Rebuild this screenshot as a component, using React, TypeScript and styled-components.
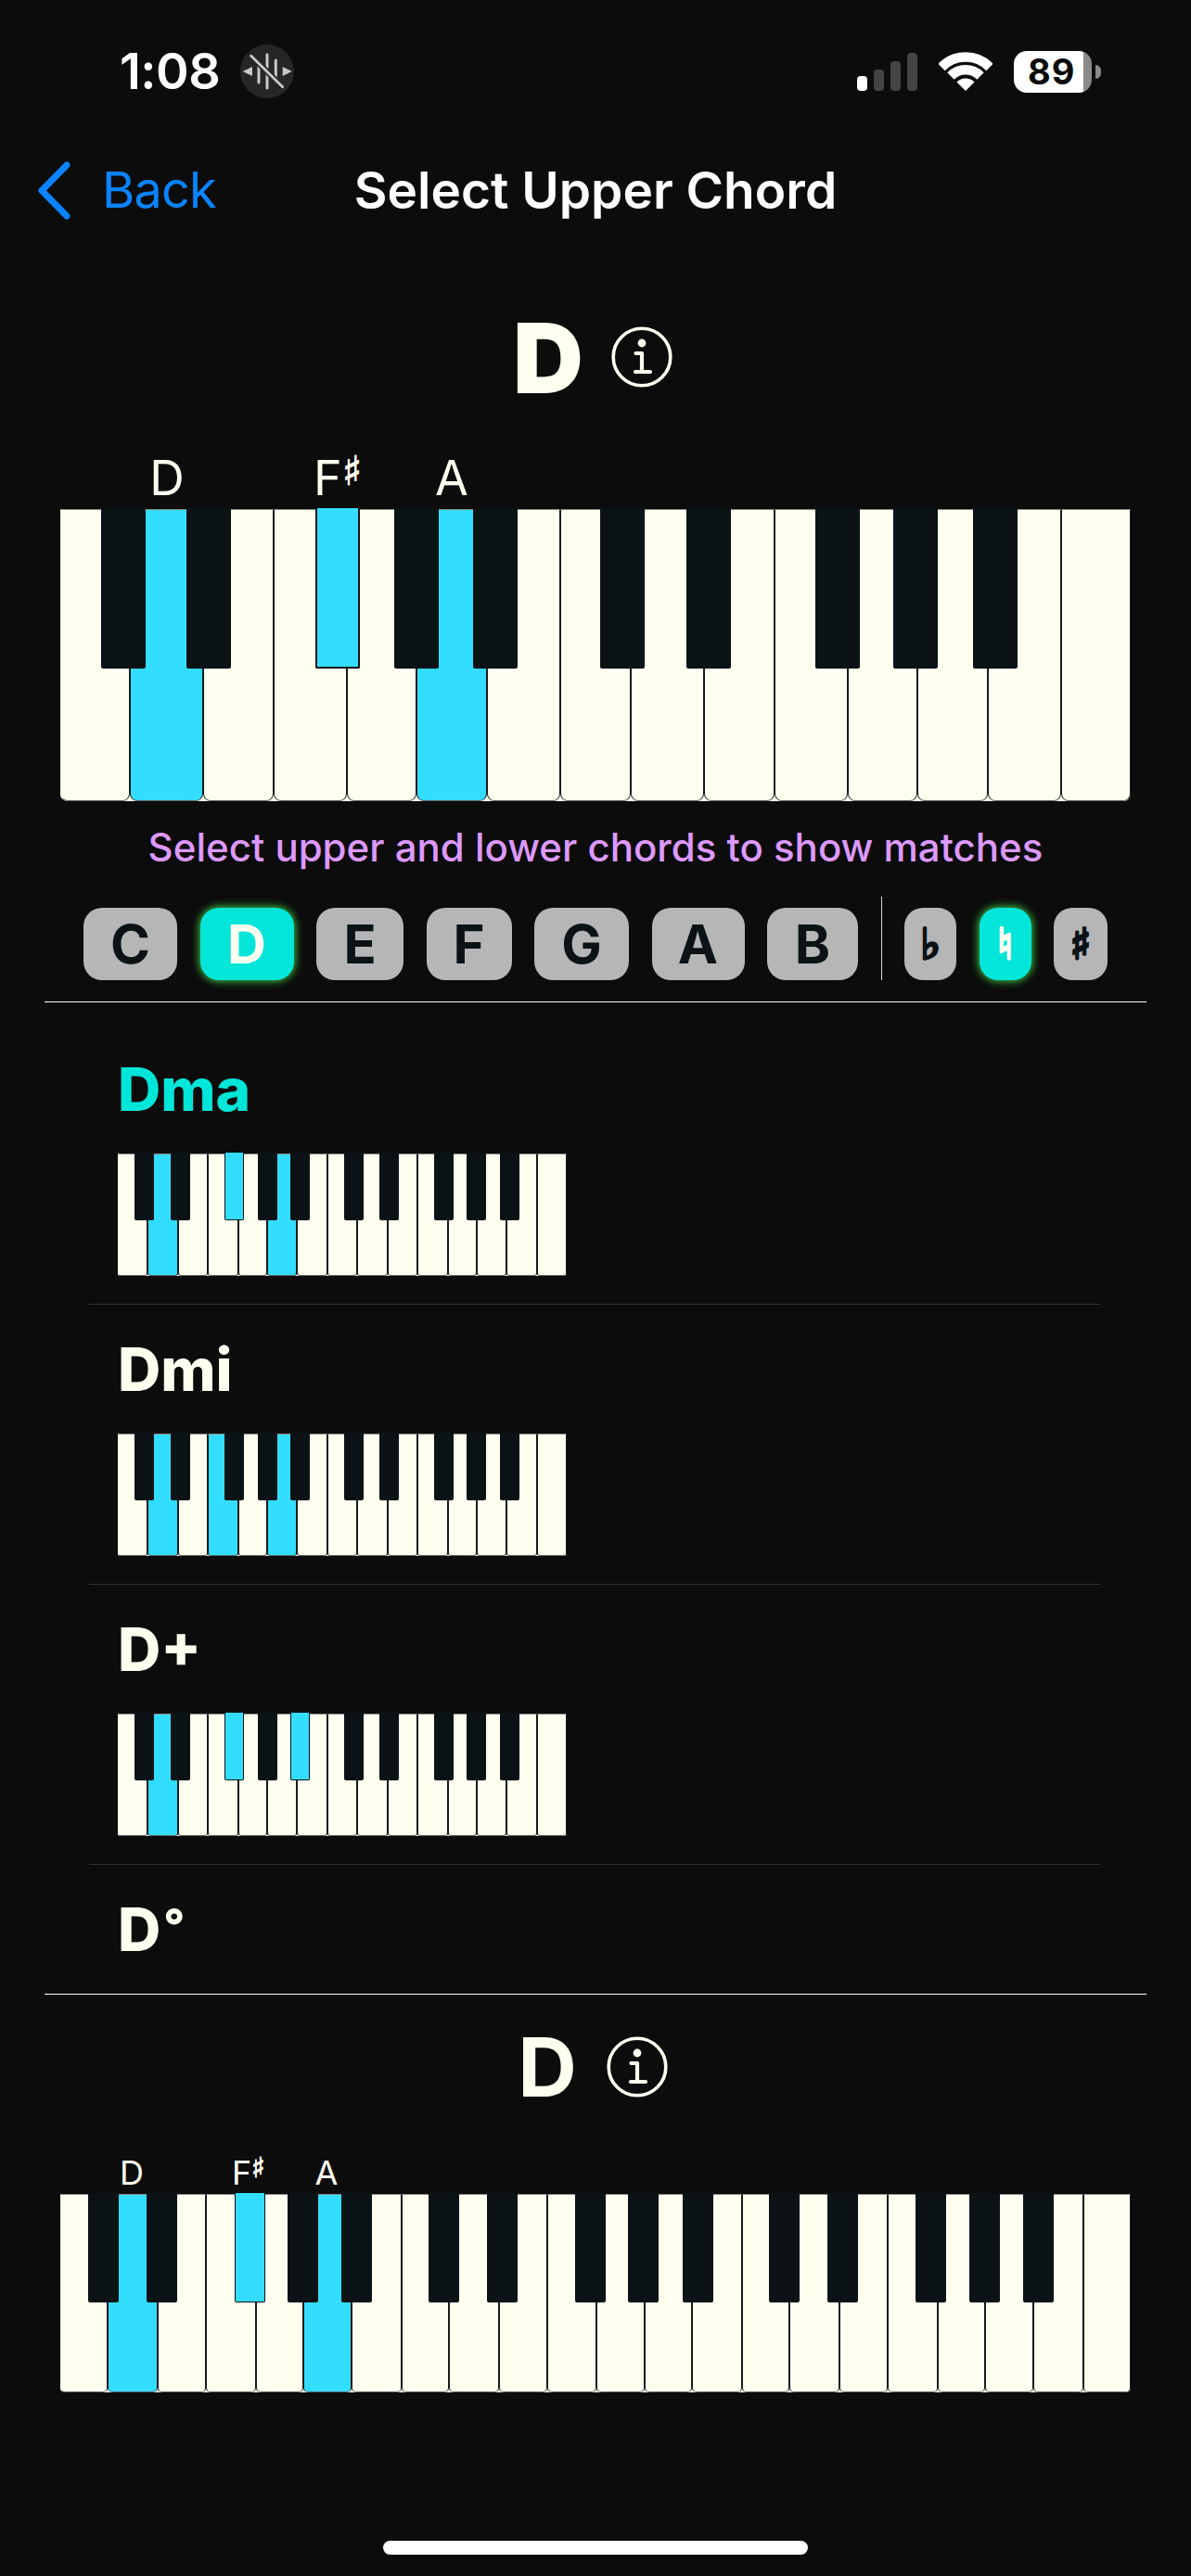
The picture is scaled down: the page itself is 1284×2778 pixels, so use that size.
import React from 'react';
import styled, { createGlobalStyle } from 'styled-components';

const IVORY = '#fffff0';
const CYAN = '#33ddff';
const TEAL = '#04e6d9';
const INK = '#0b1316';

const GlobalStyle = createGlobalStyle`
  html, body {
    margin: 0;
    padding: 0;
    background: #0c0c0c;
  }
  * {
    box-sizing: border-box;
  }
`;

const Page = styled.div`
  width: 1284px;
  height: 2778px;
  overflow: hidden;
  display: flex;
  flex-direction: column;
  align-items: center;
  background: #0c0c0c;
  color: ${IVORY};
  font-family: Inter, 'Liberation Sans', sans-serif;
`;

// Barra de status
const StatusBar = styled.div`
  width: 100%;
  height: 154px;
  display: flex;
  align-items: center;
  justify-content: space-between;
  padding: 0 97px 0 129px;
`;

const StatusLeft = styled.div`
  display: flex;
  align-items: center;
  gap: 22px;
`;

const Time = styled.span`
  font-size: 54px;
  font-weight: 600;
  color: #fff;
  line-height: 1;
  letter-spacing: -0.5px;
`;

const StatusRight = styled.div`
  display: flex;
  align-items: center;
  gap: 23px;
`;

const Signal = styled.div`
  display: flex;
  align-items: flex-end;
  gap: 7px;
  height: 41px;
`;

const SignalBar = styled.div<{ $h: number; $on?: boolean }>`
  width: 11px;
  height: ${p => p.$h}px;
  border-radius: 4px;
  background: ${p => (p.$on ? '#fff' : '#444')};
`;

const Battery = styled.div`
  position: relative;
  width: 84px;
  height: 45px;
  border-radius: 14px;
  overflow: hidden;
  background: linear-gradient(to right, #fff 0, #fff 75px, #8a8a8a 75px);
  color: #0b0b0b;
  font-size: 38px;
  font-weight: 700;
  line-height: 45px;
  padding-left: 15px;
  letter-spacing: 1px;
`;

const BatteryGroup = styled.div`
  display: flex;
  align-items: center;
  gap: 4px;
`;

const BatteryTip = styled.div`
  width: 6px;
  height: 15px;
  border-radius: 0 8px 8px 0;
  background: #8a8a8a;
`;

// Navegação
const Nav = styled.div`
  width: 100%;
  height: 102px;
  display: grid;
  grid-template-columns: 1fr auto 1fr;
  align-items: center;
  padding: 0 41px;
`;

const BackLink = styled.div`
  display: flex;
  align-items: center;
  gap: 34px;
  color: #0a84ff;
  font-size: 54px;
  font-weight: 400;
  line-height: 1;
  letter-spacing: -0.8px;
`;

const NavTitle = styled.div`
  font-size: 55px;
  font-weight: 600;
  color: #fff;
  line-height: 1;
`;

// Cabeçalho do acorde
const ChordHeading = styled.div<{ $h: number; $top: number; $gap: number; $shift: number }>`
  height: ${p => p.$h}px;
  margin-top: ${p => p.$top}px;
  padding-right: ${p => p.$shift}px;
  display: flex;
  align-items: center;
  gap: ${p => p.$gap}px;
`;

const ChordLetter = styled.span<{ $size: number; $weight: number }>`
  font-size: ${p => p.$size}px;
  font-weight: ${p => p.$weight};
  line-height: 1;
`;

// Teclado
const KeyboardBox = styled.div<{ $w: number; $h: number; $top: number; $r: number }>`
  position: relative;
  flex: none;
  width: ${p => p.$w}px;
  height: ${p => p.$h}px;
  margin-top: ${p => p.$top}px;
  display: flex;
  background: ${IVORY};
  border-radius: 0 0 ${p => p.$r}px ${p => p.$r}px;
`;

const WhiteKey = styled.div<{ $grow: number; $on: boolean; $r: number }>`
  flex: ${p => p.$grow} 1 0;
  height: 100%;
  background: ${p => (p.$on ? CYAN : IVORY)};
  border-left: 1px solid #171b1d;
  border-right: 1px solid #171b1d;
  border-bottom: 1px solid #5b6062;
  border-top: 1px solid #8a8d88;
  border-radius: 0 0 ${p => p.$r}px ${p => p.$r}px;

  &:first-child {
    border-left-color: transparent;
  }
  &:last-of-type {
    border-right-color: transparent;
  }
`;

const BlackKey = styled.div<{ $on: boolean; $h: number; $line: number }>`
  position: absolute;
  top: -1px;
  height: ${p => p.$h}px;
  background: ${p => (p.$on ? CYAN : INK)};
  border: ${p => (p.$on ? `${p.$line}px solid ${INK}` : 'none')};
  border-top: none;
  border-radius: 0 0 2px 2px;
`;

const KeyLabel = styled.span<{ $size: number; $lift: number }>`
  position: absolute;
  bottom: 100%;
  margin-bottom: ${p => p.$lift}px;
  transform: translateX(-50%);
  font-size: ${p => p.$size}px;
  font-weight: 400;
  line-height: 1;
  white-space: nowrap;
`;

const Sharp = styled.span`
  font-family: 'DejaVu Sans', sans-serif;
  font-weight: 700;
  font-size: 0.84em;
  vertical-align: 0.26em;
  -webkit-text-stroke: 1px ${IVORY};
`;

const Hint = styled.div`
  margin-top: 20px;
  height: 60px;
  font-size: 42px;
  font-weight: 500;
  line-height: 60px;
  color: #dd99ff;
`;

const ButtonRow = styled.div`
  height: 90px;
  margin-top: 23px;
  display: flex;
  align-items: flex-end;
  justify-content: center;
  gap: 24.5px;
`;

const NoteButton = styled.div<{ $w: number; $on?: boolean; $accidental?: boolean }>`
  width: ${p => p.$w}px;
  height: 78px;
  display: flex;
  align-items: center;
  justify-content: center;
  border-radius: 20px;
  background: ${p => (p.$on ? TEAL : '#b6b6b6')};
  color: ${p => (p.$on ? IVORY : INK)};
  box-shadow: ${p => (p.$on ? '0 0 9px 1px #3fd44c' : 'none')};
  font-family: ${p => (p.$accidental ? "'DejaVu Sans', sans-serif" : 'Inter, sans-serif')};
  font-size: ${p => (p.$accidental ? 46 : 58)}px;
  font-weight: 700;
  line-height: 1;
  -webkit-text-stroke: ${p => (p.$accidental ? `3px ${p.$on ? IVORY : INK}` : '0')};
`;

const RowSplit = styled.div`
  width: 1px;
  height: 90px;
  background: #d8d8d0;
`;

const Rule = styled.div<{ $top?: number }>`
  flex: none;
  width: 1188px;
  height: 1px;
  margin-top: ${p => p.$top ?? 0}px;
  background: ${IVORY};
`;

// Lista de acordes
const ChordList = styled.div`
  flex: none;
  width: 100%;
  height: 1069px;
  padding: 24px 97px 0 96px;
  overflow: hidden;
`;

const ChordRow = styled.div`
  height: 302px;
  padding: 35px 0 0 31px;
  border-bottom: 1px solid #333;
`;

const ChordName = styled.div<{ $active?: boolean }>`
  height: 70px;
  font-size: 64px;
  font-weight: 800;
  line-height: 70px;
  color: ${p => (p.$active ? '#00e6d8' : IVORY)};
`;

const Degree = styled.span`
  position: relative;
  top: -10px;
  margin-left: 3px;
  font-size: 50px;
`;

const HomeIndicator = styled.div`
  flex: none;
  width: 458px;
  height: 15px;
  margin-top: 160px;
  border-radius: 8px;
  background: #fff;
`;

type KeyboardProps = {
  width: number;
  height: number;
  octaves: number;
  notes: string[];
  top?: number;
  radius?: number;
  blackWidth: number;
  blackHeight: number;
  blackLine?: number;
  labels?: { text: React.ReactNode; at: number }[];
  labelSize?: number;
  labelLift?: number;
};

const WHITE = ['C', 'D', 'E', 'F', 'G', 'A', 'B'];
const WHITE_SIZE = [0.974, 1.026, 0.987, 1.026, 0.974, 0.987, 1.026];
const BLACK = [
  { name: 'C#', at: 0.88 },
  { name: 'D#', at: 2.08 },
  { name: 'F#', at: 3.89 },
  { name: 'G#', at: 4.99 },
  { name: 'A#', at: 6.1 },
];

function Keyboard({
  width,
  height,
  octaves,
  notes,
  top = 0,
  radius = 8,
  blackWidth,
  blackHeight,
  blackLine = 1,
  labels = [],
  labelSize = 52,
  labelLift = 6,
}: KeyboardProps) {
  const unit = width / (octaves * 7 + 1);
  const whites: { id: string; size: number }[] = [];
  for (let o = 0; o < octaves; o++) {
    WHITE.forEach((n, i) => whites.push({ id: n + o, size: WHITE_SIZE[i] }));
  }
  whites.push({ id: 'C' + octaves, size: WHITE_SIZE[0] });

  const blacks: { id: string; center: number }[] = [];
  for (let o = 0; o < octaves; o++) {
    BLACK.forEach(b => blacks.push({ id: b.name + o, center: (b.at + o * 7) * unit }));
  }

  return (
    <KeyboardBox $w={width} $h={height} $top={top} $r={radius}>
      {whites.map(k => (
        <WhiteKey key={k.id} $grow={k.size} $on={notes.includes(k.id)} $r={radius} />
      ))}
      {blacks.map(k => (
        <BlackKey
          key={k.id}
          $on={notes.includes(k.id)}
          $h={blackHeight}
          $line={blackLine}
          style={{ left: k.center - blackWidth / 2, width: blackWidth }}
        />
      ))}
      {labels.map((l, i) => (
        <KeyLabel key={i} $size={labelSize} $lift={labelLift} style={{ left: l.at }}>
          {l.text}
        </KeyLabel>
      ))}
    </KeyboardBox>
  );
}

function InfoIcon() {
  return (
    <svg width="66" height="66" viewBox="0 0 66 66" fill="none">
      <circle cx="33" cy="33" r="30.8" stroke={IVORY} strokeWidth="3.6" />
      <circle cx="33" cy="18" r="4.4" fill={IVORY} />
      <path
        d="M26.5 29H33V49M26 49H42"
        stroke={IVORY}
        strokeWidth="4.2"
        strokeLinecap="round"
        strokeLinejoin="round"
      />
    </svg>
  );
}

function WifiIcon() {
  return (
    <svg width="58" height="42" viewBox="0 0 58 42">
      <path d="M3 16.5A36.5 36.5 0 0 1 55 16.5" fill="none" stroke="#fff" strokeWidth="10.5" />
      <path d="M13 26A22.5 22.5 0 0 1 45 26" fill="none" stroke="#fff" strokeWidth="10.5" />
      <path d="M29 42L19.5 32.5A13.5 13.5 0 0 1 38.5 32.5Z" fill="#fff" />
    </svg>
  );
}

function SilentIcon() {
  return (
    <svg width="58" height="58" viewBox="0 0 58 58">
      <circle cx="29" cy="29" r="29" fill="#262626" />
      <path d="M2.7 29L13 24V34Z M55.7 29L45.7 24V34Z" fill="#c8c8c8" />
      <path
        d="M20 22V41M29 10.7V47M38.3 17V41"
        stroke="#c8c8c8"
        strokeWidth="3"
        strokeLinecap="round"
      />
      <path d="M11.7 12.3L45.7 45.7" stroke="#262626" strokeWidth="6.5" />
      <path d="M11.7 12.3L45.7 45.7" stroke="#c8c8c8" strokeWidth="2.8" strokeLinecap="round" />
    </svg>
  );
}

function ChevronIcon() {
  return (
    <svg width="35" height="63" viewBox="0 0 35 63" fill="none">
      <path
        d="M31 4L4 31.5L31 59"
        stroke="#0a84ff"
        strokeWidth="7"
        strokeLinecap="round"
        strokeLinejoin="round"
      />
    </svg>
  );
}

const noteButtons = [
  { text: 'C', w: 101 },
  { text: 'D', w: 101, on: true },
  { text: 'E', w: 94 },
  { text: 'F', w: 92 },
  { text: 'G', w: 102 },
  { text: 'A', w: 100 },
  { text: 'B', w: 98 },
];

const accidentals = [
  { text: '♭', w: 56 },
  { text: '♮', w: 56, on: true },
  { text: '♯', w: 58 },
];

const chords = [
  { name: 'Dma', active: true, notes: ['D0', 'F#0', 'A0'] },
  { name: 'Dmi', notes: ['D0', 'F0', 'A0'] },
  { name: 'D+', notes: ['D0', 'F#0', 'A#0'] },
];

const FSharp = (
  <>
    F<Sharp>♯</Sharp>
  </>
);

export default function App() {
  return (
    <Page>
      <GlobalStyle />

      <StatusBar>
        <StatusLeft>
          <Time>1:08</Time>
          <SilentIcon />
        </StatusLeft>
        <StatusRight>
          <Signal>
            <SignalBar $h={16} $on />
            <SignalBar $h={23} />
            <SignalBar $h={32} />
            <SignalBar $h={41} />
          </Signal>
          <WifiIcon />
          <BatteryGroup>
            <Battery>89</Battery>
            <BatteryTip />
          </BatteryGroup>
        </StatusRight>
      </StatusBar>

      <Nav>
        <BackLink>
          <ChevronIcon />
          Back
        </BackLink>
        <NavTitle>Select Upper Chord</NavTitle>
      </Nav>

      <ChordHeading $h={170} $top={44} $gap={30} $shift={6}>
        <ChordLetter $size={105} $weight={900}>
          D
        </ChordLetter>
        <InfoIcon />
      </ChordHeading>

      <Keyboard
        width={1154}
        height={315}
        octaves={2}
        top={79}
        radius={8}
        blackWidth={48}
        blackHeight={173}
        blackLine={2}
        notes={['D0', 'F#0', 'A0']}
        labels={[
          { text: 'D', at: 115 },
          { text: FSharp, at: 299 },
          { text: 'A', at: 422 },
        ]}
        labelSize={52}
        labelLift={7}
      />

      <Hint>Select upper and lower chords to show matches</Hint>

      <ButtonRow>
        {noteButtons.map(b => (
          <NoteButton key={b.text} $w={b.w} $on={b.on}>
            {b.text}
          </NoteButton>
        ))}
        <RowSplit />
        {accidentals.map(b => (
          <NoteButton key={b.text} $w={b.w} $on={b.on} $accidental>
            {b.text}
          </NoteButton>
        ))}
      </ButtonRow>

      <Rule $top={23} />

      <ChordList>
        {chords.map(c => (
          <ChordRow key={c.name}>
            <ChordName $active={c.active}>{c.name}</ChordName>
            <Keyboard
              width={484}
              height={132}
              octaves={2}
              top={34}
              radius={3}
              blackWidth={21}
              blackHeight={73}
              notes={c.notes}
            />
          </ChordRow>
        ))}
        <ChordRow>
          <ChordName>
            D<Degree>°</Degree>
          </ChordName>
        </ChordRow>
      </ChordList>

      <Rule />

      <ChordHeading $h={156} $top={0} $gap={32} $shift={6}>
        <ChordLetter $size={88} $weight={700}>
          D
        </ChordLetter>
        <InfoIcon />
      </ChordHeading>

      <Keyboard
        width={1154}
        height={214}
        octaves={3}
        top={59}
        radius={5}
        blackWidth={33}
        blackHeight={118}
        blackLine={1}
        notes={['D0', 'F#0', 'A0']}
        labels={[
          { text: 'D', at: 77 },
          { text: FSharp, at: 203 },
          { text: 'A', at: 287 },
        ]}
        labelSize={36}
        labelLift={5}
      />

      <HomeIndicator />
    </Page>
  );
}
